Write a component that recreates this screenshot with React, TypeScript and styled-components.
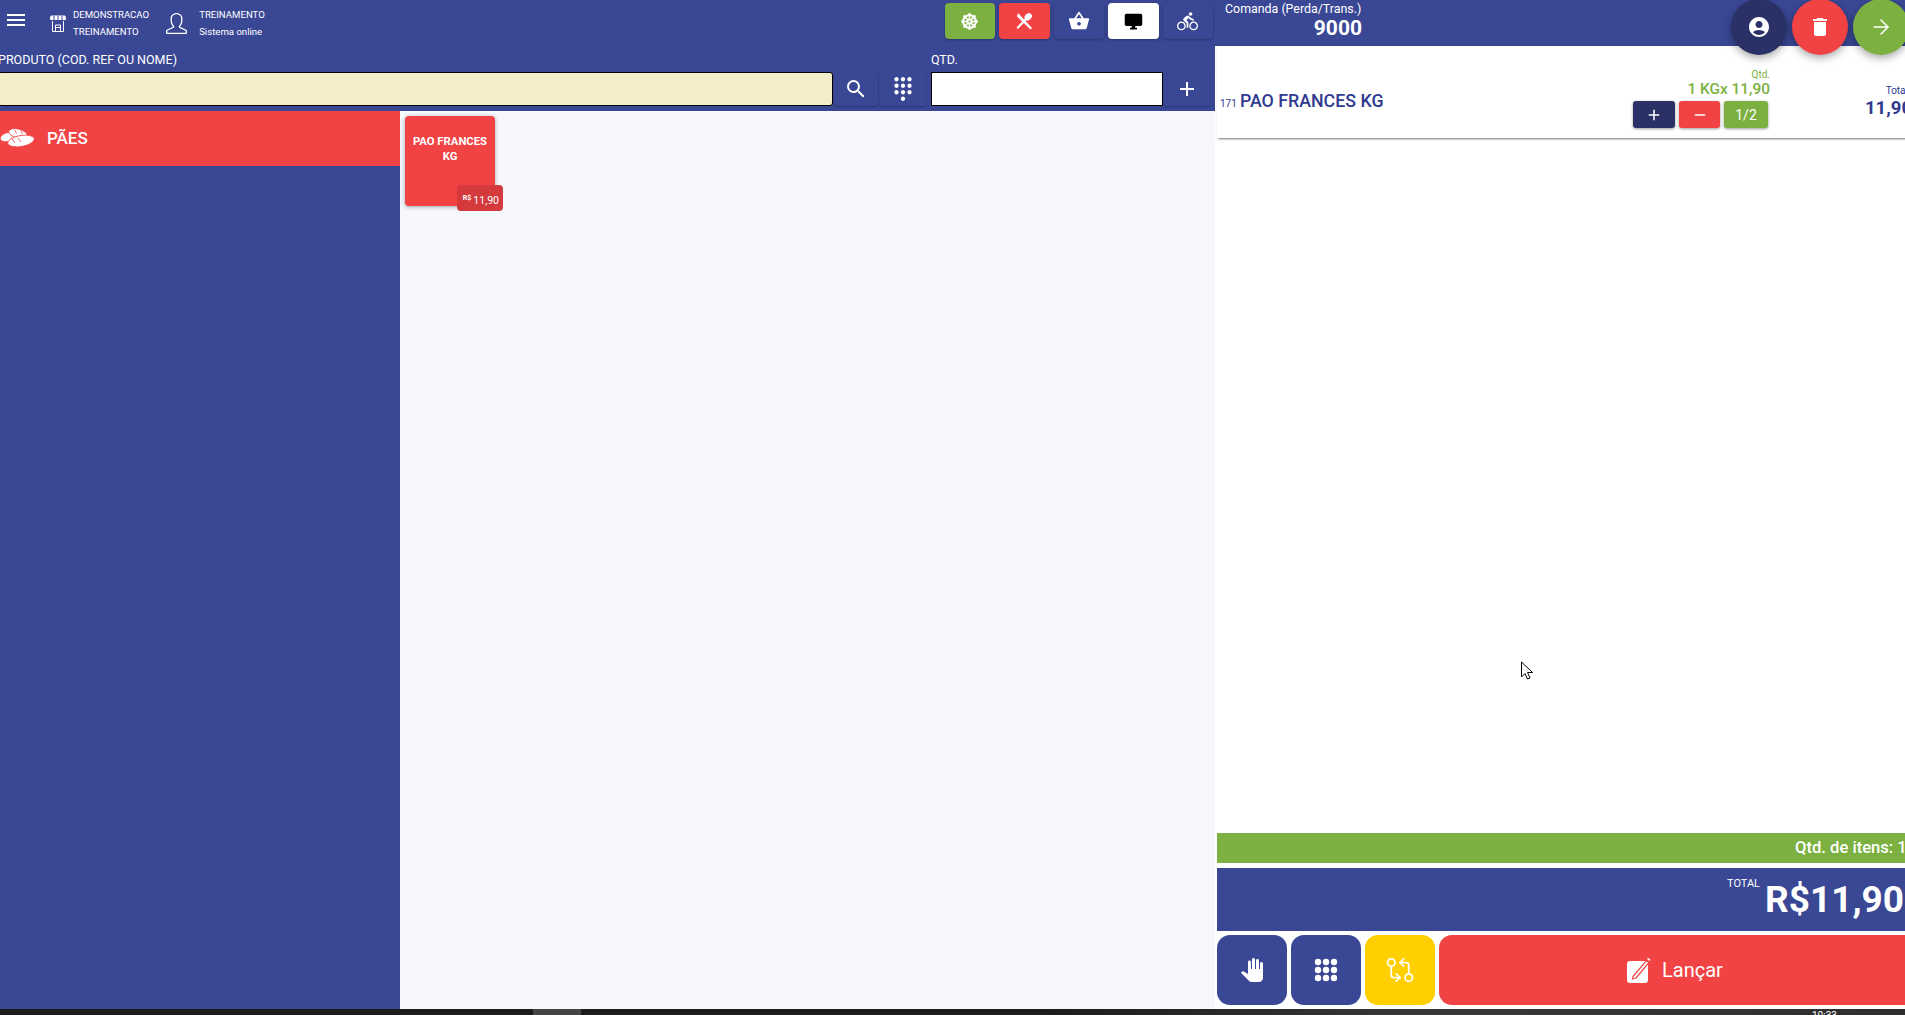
import React from 'react'
import styled, { createGlobalStyle } from 'styled-components'
import { FaDharmachakra } from 'react-icons/fa'
import {
  MdMenu,
  MdSearch,
  MdDialpad,
  MdAdd,
  MdRemove,
  MdDesktopWindows,
  MdDirectionsBike,
  MdAccountCircle,
  MdDelete,
  MdShoppingBasket,
  MdPanTool,
} from 'react-icons/md'
import { SlUser } from 'react-icons/sl'
import { ArrowRight, GitCompareArrows } from 'lucide-react'

const NAVY = '#3a4795'
const INK = '#2f3a8f'
const DARK = '#2a3166'
const RED = '#f14244'
const GREEN = '#7cb142'

const GlobalStyle = createGlobalStyle`
  html, body {
    margin: 0;
    padding: 0;
    height: 100%;
    overflow: hidden;
    background: #1c1c1c;
    font-family: Roboto, "Liberation Sans", sans-serif;
  }
`

const Screen = styled.div`
  position: relative;
  width: 1905px;
  height: 1015px;
  overflow: hidden;
  display: flex;
  flex-direction: column;
`
const Main = styled.div`
  display: flex;
  height: 1009px;
  width: 1925px;
`
const LeftPane = styled.div`
  width: 1215px;
  flex: none;
  display: flex;
  flex-direction: column;
`
const Header = styled.header`
  height: 111px;
  flex: none;
  background: ${NAVY};
  display: flex;
  flex-direction: column;
`
const TopBar = styled.div`
  height: 46px;
  display: flex;
  align-items: flex-start;
`
const MenuButton = styled.div`
  width: 32px;
  height: 32px;
  margin-top: 4px;
  color: #fff;
  display: flex;
  align-items: center;
  justify-content: center;
`
const InfoBlock = styled.div`
  display: flex;
  align-items: center;
  color: #fff;
  height: 32px;
  margin-top: 7px;
  margin-left: ${p => p.$left}px;
  gap: ${p => p.$gap}px;
`
const InfoText = styled.div`
  font-size: 9.6px;
  line-height: 17px;
  white-space: nowrap;
`
const TopActions = styled.div`
  margin-left: auto;
  margin-right: 2px;
  margin-top: 3px;
  display: flex;
  gap: 4px;
`
const TopAction = styled.div`
  width: 50.5px;
  height: 36px;
  border-radius: 4px;
  background: ${p => p.$bg};
  color: ${p => p.$fg};
  display: flex;
  align-items: center;
  justify-content: center;
  box-shadow: 0 1px 3px rgba(0, 0, 0, 0.3);
`
const SearchRow = styled.div`
  display: flex;
  align-items: flex-end;
  height: 61px;
`
const Field = styled.div`
  display: flex;
  flex-direction: column;
  gap: 6px;
  width: ${p => p.$width}px;
  margin-left: ${p => p.$left}px;
  margin-bottom: 1px;
`
const FieldLabel = styled.label`
  color: #fff;
  font-size: 12.5px;
  line-height: 13px;
  white-space: nowrap;
`
const FieldInput = styled.div`
  height: 34px;
  box-sizing: border-box;
  border: 1px solid #000;
  border-radius: ${p => p.$radius}px;
  background: ${p => p.$bg};
`
const IconButton = styled.div`
  width: ${p => p.$width}px;
  height: 34px;
  margin-bottom: 1px;
  margin-left: ${p => p.$left || 0}px;
  color: #fff;
  background: ${NAVY};
  border-radius: 3px;
  box-shadow: 0 1px 2px rgba(0, 0, 0, 0.25);
  display: flex;
  align-items: center;
  justify-content: center;
`
const Body = styled.div`
  flex: 1;
  display: flex;
  min-height: 0;
`
const Sidebar = styled.nav`
  width: 400px;
  flex: none;
  background: ${NAVY};
`
const CategoryRow = styled.div`
  height: 55px;
  box-sizing: border-box;
  padding-bottom: 1px;
  background: ${RED};
  color: #fff;
  display: flex;
  align-items: center;
  gap: 12px;
  font-size: 17px;
  font-weight: 500;
`
const Products = styled.main`
  flex: 1;
  background: #f6f8fe;
  padding: 5px;
  display: flex;
  align-items: flex-start;
`
const ProductCard = styled.div`
  position: relative;
  width: 90px;
  height: 90px;
  box-sizing: border-box;
  padding: 18px 4px 0;
  border-radius: 4px;
  background: ${RED};
  color: #fff;
  font-size: 11.3px;
  line-height: 15px;
  font-weight: 700;
  text-align: center;
  box-shadow: 0 1px 4px rgba(0, 0, 0, 0.35);
`
const PriceBadge = styled.span`
  position: absolute;
  left: 52px;
  top: 69px;
  width: 46px;
  height: 26px;
  border-radius: 4px;
  background: #d43a3c;
  font-size: 10.5px;
  font-weight: 400;
  line-height: 32px;
  text-align: right;
  padding-right: 4px;
  box-sizing: border-box;
  white-space: nowrap;
  sup {
    font-size: 7px;
    font-weight: 700;
    line-height: 0;
    margin-right: 2px;
  }
`
const RightPane = styled.aside`
  width: 710px;
  flex: none;
  display: flex;
  flex-direction: column;
  background: #fff;
`
const ComandaBar = styled.div`
  height: 46px;
  flex: none;
  background: ${NAVY};
  color: #fff;
  box-sizing: border-box;
  padding: 2px 0 0 10px;
`
const ComandaLabel = styled.div`
  font-size: 12.4px;
  line-height: 14px;
  white-space: nowrap;
`
const ComandaNumber = styled.div`
  width: 137px;
  text-align: right;
  font-size: 21px;
  line-height: 24px;
  font-weight: 700;
`
const Fabs = styled.div`
  position: absolute;
  left: 1731px;
  top: -1px;
  display: flex;
  gap: 5px;
`
const Fab = styled.div`
  width: 56px;
  height: 56px;
  border-radius: 50%;
  background: ${p => p.$bg};
  color: #fff;
  display: flex;
  align-items: center;
  justify-content: center;
  box-shadow: 0 3px 8px rgba(0, 0, 0, 0.35);
`
const ItemRow = styled.div`
  height: 92px;
  flex: none;
  margin-left: 2px;
  box-sizing: border-box;
  box-shadow: 0 2px 2px -1px rgba(0, 0, 0, 0.55);
  display: flex;
  align-items: flex-start;
  color: ${INK};
`
const ItemName = styled.div`
  margin: 45px 0 0 3px;
  display: flex;
  align-items: baseline;
  gap: 3px;
  font-size: 17.8px;
  line-height: 20px;
  font-weight: 500;
  width: 411px;
  white-space: nowrap;
  small {
    font-size: 10px;
    font-weight: 400;
  }
`
const QtyColumn = styled.div`
  width: 139px;
  color: ${GREEN};
  text-align: right;
  padding-top: 23px;
`
const TinyLabel = styled.div`
  font-size: 10px;
  line-height: 11px;
`
const TotalLabel = styled(TinyLabel)`
  margin-right: 4px;
`
const QtyValue = styled.div`
  font-size: 15.4px;
  line-height: 18px;
  font-weight: 500;
  white-space: nowrap;
`
const QtyButtons = styled.div`
  display: flex;
  gap: 4px;
  margin: 3px 2px 0 0;
  justify-content: flex-end;
`
const QtyButton = styled.div`
  width: ${p => p.$width}px;
  height: 27px;
  border-radius: 3px;
  background: ${p => p.$bg};
  color: #fff;
  font-size: 14px;
  display: flex;
  align-items: center;
  justify-content: center;
  box-shadow: 0 1px 3px rgba(0, 0, 0, 0.4);
`
const TotalColumn = styled.div`
  width: 142px;
  text-align: right;
  padding-top: 39px;
`
const TotalValue = styled.div`
  font-size: 18.5px;
  line-height: 24px;
  font-weight: 700;
`
const Spacer = styled.div`
  flex: 1;
`
const ItemsBar = styled.div`
  height: 30px;
  flex: none;
  margin-left: 2px;
  background: ${GREEN};
  color: #fff;
  font-size: 16.6px;
  font-weight: 500;
  line-height: 30px;
  white-space: nowrap;
  box-sizing: border-box;
  padding-left: 578px;
`
const TotalBar = styled.div`
  height: 63px;
  flex: none;
  margin: 5px 0 4px 2px;
  background: ${NAVY};
  color: #fff;
  display: flex;
  align-items: flex-start;
  justify-content: flex-end;
  box-sizing: border-box;
  padding: 9px 21px 0 0;
  gap: 5px;
`
const TotalCaption = styled.span`
  font-size: 11px;
  line-height: 12px;
  margin-top: 1px;
`
const TotalAmount = styled.span`
  font-size: 37px;
  line-height: 46px;
  font-weight: 700;
`
const ActionRow = styled.div`
  height: 70px;
  flex: none;
  margin: 0 0 4px 2px;
  display: flex;
  gap: 4px;
`
const SquareAction = styled.div`
  width: 70px;
  border-radius: 13px;
  background: ${p => p.$bg};
  color: #fff;
  display: flex;
  align-items: center;
  justify-content: center;
`
const LaunchButton = styled.div`
  flex: 1;
  border-radius: 13px;
  background: ${RED};
  color: #fff;
  font-size: 20px;
  display: flex;
  align-items: center;
  gap: 11px;
  padding-left: 188px;
`
const Taskbar = styled.div`
  height: 6px;
  flex: none;
  background: linear-gradient(90deg, #1c1c1c 0%, #1c1c1c 55%, #383838 75%, #2e2e2e 100%);
  padding-left: 533px;
  position: relative;
  overflow: hidden;
`
const TaskbarItem = styled.div`
  width: 48px;
  height: 6px;
  background: #444;
`
const Clock = styled.span`
  position: absolute;
  left: 1812px;
  top: 1px;
  color: #fff;
  font-size: 10px;
  line-height: 12px;
`
const Cursor = styled.svg`
  position: absolute;
  left: 1520px;
  top: 661px;
`

const StoreIcon = () => (
  <svg width="16" height="17" viewBox="0 0 16 17" fill="none" stroke="#fff" strokeWidth="1">
    <path d="M2.500 6v10.500h11V6" />
    <path d="M5.500 16v-6h5v6M5.500 12.500h5" />
    <path d="M1 1h14l.5 3.500H.5z" fill="#fff" />
    <path d="M4 1v4M8 1v4M12 1v4" stroke={NAVY} />
  </svg>
)

const CutleryIcon = () => (
  <svg width="18" height="18" viewBox="0 0 18 18" fill="#fff">
    <path d="M3 1 17 16l-1.500 1.500L5 7.500 2 4.500z" />
    <ellipse cx="13.200" cy="4.800" rx="3.200" ry="4" transform="rotate(45 13.200 4.800)" />
    <path d="m10.500 6-9 9.500L3 17l9-9.500z" />
  </svg>
)

const BreadIcon = () => (
  <svg width="35" height="20" viewBox="0 0 35 20" fill="#fff" stroke={RED} strokeWidth="0.800">
    <ellipse cx="8" cy="9" rx="8" ry="4.500" transform="rotate(-15 8 9)" />
    <ellipse cx="18" cy="5.500" rx="9.500" ry="4.500" transform="rotate(14 18 5.500)" />
    <ellipse cx="21" cy="13" rx="13.500" ry="5.500" transform="rotate(-10 21 13)" />
    <path d="M15 2l1.500 3.500M21 2.500l1.500 3.500M12 11l3 4M18 10l3 4" fill="none" />
  </svg>
)

const DotsIcon = () => (
  <svg width="24" height="24" viewBox="0 0 24 24" fill="#fff">
    {[4, 12, 20].flatMap(y =>
      [4, 12, 20].map(x => <circle key={`${x}-${y}`} cx={x} cy={y} r="3.200" />),
    )}
  </svg>
)

const NoteIcon = () => (
  <svg width="24" height="26" viewBox="0 0 24 26" fill="none">
    <rect x="0" y="4" width="21" height="22" rx="3" fill="#fff" />
    <path d="M6 19.500 19.500 3.500l2.500 2L9 21l-3.500 1z" fill="#fff" stroke={RED} strokeWidth="1.200" />
    <path d="m20 2 1-1.300 2.500 2L22.500 4z" fill="#fff" />
  </svg>
)

const App: React.FC = () => (
  <Screen>
    <GlobalStyle />
    <Main>
      <LeftPane>
        <Header>
          <TopBar>
            <MenuButton>
              <MdMenu size={24} />
            </MenuButton>
            <InfoBlock $left={18} $gap={7}>
              <StoreIcon />
              <InfoText>
                DEMONSTRACAO
                <br />
                TREINAMENTO
              </InfoText>
            </InfoBlock>
            <InfoBlock $left={17} $gap={12}>
              <SlUser size={21} />
              <InfoText>
                TREINAMENTO
                <br />
                Sistema online
              </InfoText>
            </InfoBlock>
            <TopActions>
              <TopAction $bg={GREEN} $fg="#fff">
                <FaDharmachakra size={17} />
              </TopAction>
              <TopAction $bg={RED} $fg="#fff">
                <CutleryIcon />
              </TopAction>
              <TopAction $bg={NAVY} $fg="#fff">
                <MdShoppingBasket size={22} />
              </TopAction>
              <TopAction $bg="#fff" $fg="#000">
                <MdDesktopWindows size={21} />
              </TopAction>
              <TopAction $bg={NAVY} $fg="#fff">
                <MdDirectionsBike size={21} />
              </TopAction>
            </TopActions>
          </TopBar>
          <SearchRow>
            <Field $width={835} $left={-2}>
              <FieldLabel>PRODUTO (COD. REF OU NOME)</FieldLabel>
              <FieldInput $bg="#f4edca" $radius={3} />
            </Field>
            <IconButton $width={44} $left={1}>
              <MdSearch size={24} />
            </IconButton>
            <IconButton $width={47} $left={1}>
              <MdDialpad size={26} />
            </IconButton>
            <Field $width={232} $left={5}>
              <FieldLabel>QTD.</FieldLabel>
              <FieldInput $bg="#fff" $radius={0} />
            </Field>
            <IconButton $width={47}>
              <MdAdd size={24} />
            </IconButton>
          </SearchRow>
        </Header>
        <Body>
          <Sidebar>
            <CategoryRow>
              <BreadIcon />
              PÃES
            </CategoryRow>
          </Sidebar>
          <Products>
            <ProductCard>
              PAO FRANCES KG
              <PriceBadge>
                <sup>R$</sup>11,90
              </PriceBadge>
            </ProductCard>
          </Products>
        </Body>
      </LeftPane>
      <RightPane>
        <ComandaBar>
          <ComandaLabel>Comanda (Perda/Trans.)</ComandaLabel>
          <ComandaNumber>9000</ComandaNumber>
        </ComandaBar>
        <ItemRow>
          <ItemName>
            <small>171</small>PAO FRANCES KG
          </ItemName>
          <QtyColumn>
            <TinyLabel>Qtd.</TinyLabel>
            <QtyValue>1 KGx 11,90</QtyValue>
            <QtyButtons>
              <QtyButton $width={42} $bg={DARK}>
                <MdAdd size={18} />
              </QtyButton>
              <QtyButton $width={41} $bg={RED}>
                <MdRemove size={18} />
              </QtyButton>
              <QtyButton $width={44} $bg={GREEN}>
                1/2
              </QtyButton>
            </QtyButtons>
          </QtyColumn>
          <TotalColumn>
            <TotalLabel>Total</TotalLabel>
            <TotalValue>11,90</TotalValue>
          </TotalColumn>
        </ItemRow>
        <Spacer />
        <ItemsBar>Qtd. de itens: 1</ItemsBar>
        <TotalBar>
          <TotalCaption>TOTAL</TotalCaption>
          <TotalAmount>R$11,90</TotalAmount>
        </TotalBar>
        <ActionRow>
          <SquareAction $bg={NAVY}>
            <MdPanTool size={24} />
          </SquareAction>
          <SquareAction $bg={NAVY}>
            <DotsIcon />
          </SquareAction>
          <SquareAction $bg="#ffcf00">
            <GitCompareArrows size={30} strokeWidth={1.4} />
          </SquareAction>
          <LaunchButton>
            <NoteIcon />
            Lançar
          </LaunchButton>
        </ActionRow>
      </RightPane>
    </Main>
    <Taskbar>
      <TaskbarItem />
      <Clock>10:33</Clock>
    </Taskbar>
    <Fabs>
      <Fab $bg={DARK}>
        <MdAccountCircle size={24} />
      </Fab>
      <Fab $bg={RED}>
        <MdDelete size={24} />
      </Fab>
      <Fab $bg={GREEN}>
        <ArrowRight size={24} strokeWidth={1.5} />
      </Fab>
    </Fabs>
    <Cursor width="14" height="20" viewBox="0 0 14 20" fill="#fff" stroke="#000" strokeWidth="1">
      <path d="M1.500 1v15l3.500-3.500 2.500 5.500 2.500-1-2.500-5.500h5z" />
    </Cursor>
  </Screen>
)

export default App
